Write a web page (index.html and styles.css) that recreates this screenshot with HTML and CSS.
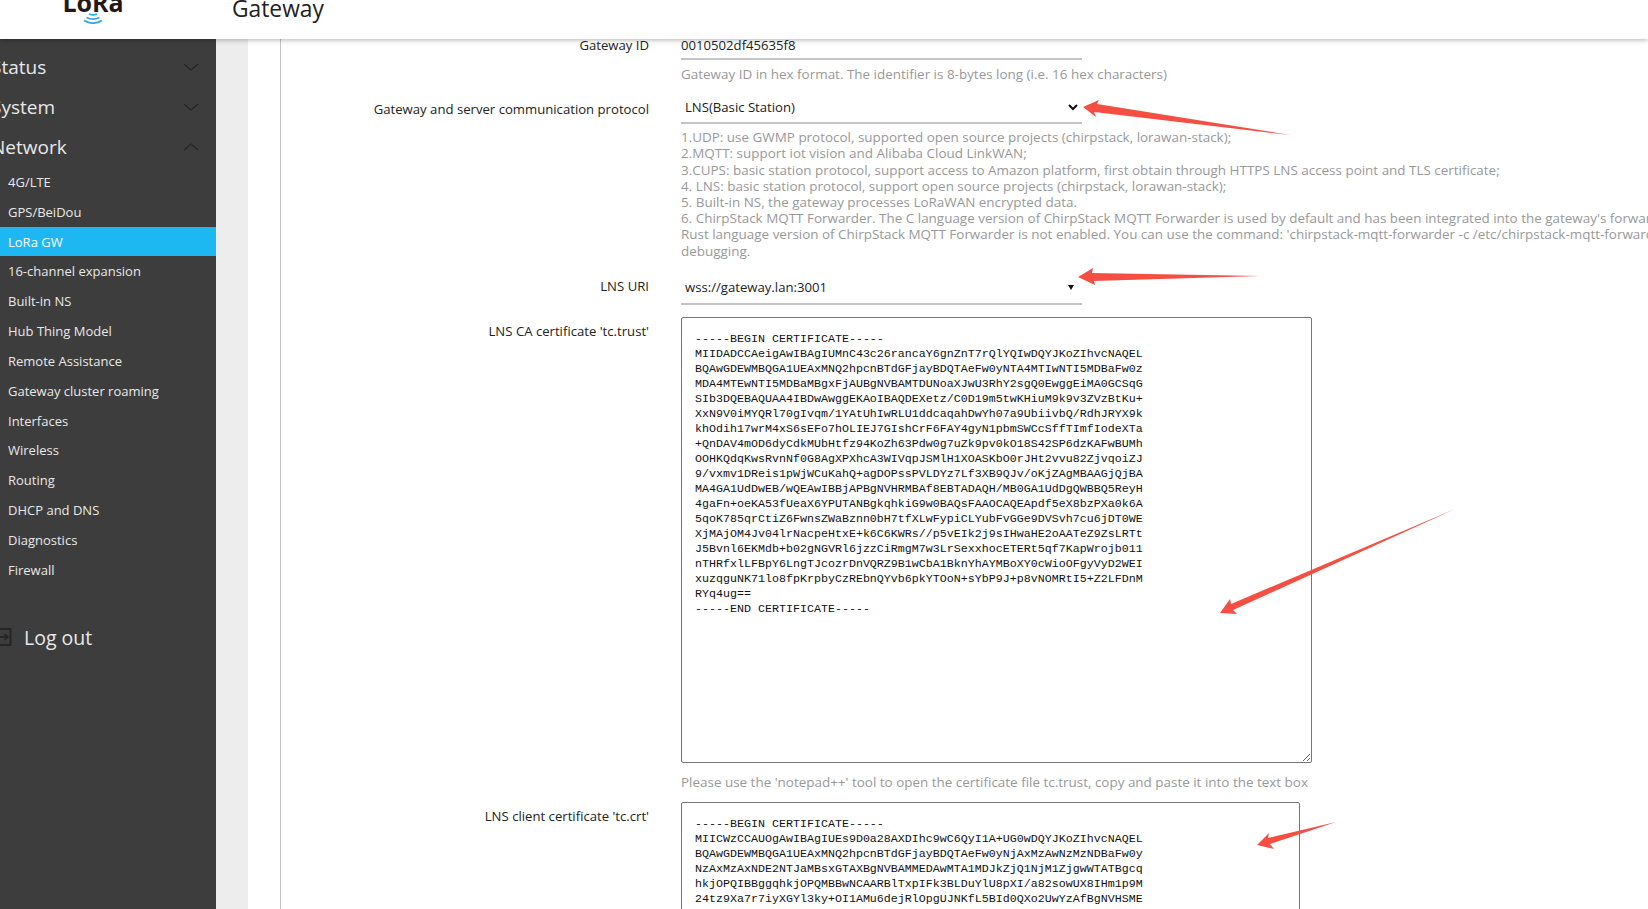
FILE: index.html
```html
<!DOCTYPE html>
<html lang="en">
<head>
    <meta charset="UTF-8">
    <title>LoRa Gateway</title>
    <link rel="stylesheet" href="styles.css">
</head>
<body>
    <header class="topbar">
        <div class="logo">
            <span class="logo-text">LoRa</span>
            <svg class="logo-waves" width="20" height="11" viewBox="0 0 20 11" fill="none" stroke="#35a9e4" stroke-width="1.800">
                <path d="M6 1c2.500 1.200 5.500 1.200 8 0"/>
                <path d="M3.500 4.500c4 2 9 2 13 0"/>
                <path d="M1 7.500c5.500 3.200 12.500 3.200 18 0"/>
            </svg>
        </div>
        <div class="page-title">Gateway</div>
    </header>

    <div class="layout">
        <nav class="sidebar">
            <a class="nav-top">Status
                <svg class="chev" width="16" height="8" viewBox="0 0 16 8"><path d="M1 1l7 6 7-6"/></svg>
            </a>
            <a class="nav-top">System
                <svg class="chev" width="16" height="8" viewBox="0 0 16 8"><path d="M1 1l7 6 7-6"/></svg>
            </a>
            <a class="nav-top">Network
                <svg class="chev" width="16" height="8" viewBox="0 0 16 8"><path d="M1 7l7-6 7 6"/></svg>
            </a>
            <ul class="nav-sub">
                <li>4G/LTE</li>
                <li>GPS/BeiDou</li>
                <li class="active">LoRa GW</li>
                <li>16-channel expansion</li>
                <li>Built-in NS</li>
                <li>Hub Thing Model</li>
                <li>Remote Assistance</li>
                <li>Gateway cluster roaming</li>
                <li>Interfaces</li>
                <li>Wireless</li>
                <li>Routing</li>
                <li>DHCP and DNS</li>
                <li>Diagnostics</li>
                <li>Firewall</li>
            </ul>
            <a class="logout">
                <svg class="logout-icon" width="12" height="18" viewBox="0 0 12 18" fill="none" stroke="#262626" stroke-width="2">
                    <path d="M0 1h10.500v16H0"/>
                    <path d="M0 9h7M4.500 6l3 3-3 3"/>
                </svg>
                Log out
            </a>
        </nav>

        <main class="content">
            <div class="panel">
                <form class="form">
                    <div class="row row-first">
                        <label>Gateway ID</label>
                        <div class="field">
                            <input class="text-input" type="text" value="0010502df45635f8">
                            <p class="help help-short">Gateway ID in hex format. The identifier is 8-bytes long (i.e. 16 hex characters)</p>
                        </div>
                    </div>
                    <div class="row">
                        <label class="label-protocol">Gateway and server communication protocol</label>
                        <div class="field">
                            <div class="select-box">
                                <span>LNS(Basic Station)</span>
                                <svg width="10" height="7" viewBox="0 0 10 7" fill="none" stroke="#111" stroke-width="2"><path d="M1 1l4 4 4-4"/></svg>
                            </div>
                            <p class="help help-list">1.UDP: use GWMP protocol, supported open source projects (chirpstack, lorawan-stack);<br>
2.MQTT: support iot vision and Alibaba Cloud LinkWAN;<br>
3.CUPS: basic station protocol, support access to Amazon platform, first obtain through HTTPS LNS access point and TLS certificate;<br>
4. LNS: basic station protocol, support open source projects (chirpstack, lorawan-stack);<br>
5. Built-in NS, the gateway processes LoRaWAN encrypted data.<br>
6. ChirpStack MQTT Forwarder. The C language version of ChirpStack MQTT Forwarder is used by default and has been integrated into the gateway's forwarder.<br>
Rust language version of ChirpStack MQTT Forwarder is not enabled. You can use the command: 'chirpstack-mqtt-forwarder -c /etc/chirpstack-mqtt-forwarder.toml' for<br>
debugging.</p>
                        </div>
                    </div>
                    <div class="row row-uri">
                        <label>LNS URI</label>
                        <div class="field">
                            <div class="select-box select-uri">
                                <span>wss://gateway.lan:3001</span>
                                <svg width="10" height="7" viewBox="0 0 10 7" fill="#111"><path d="M2 1h6L5 6z"/></svg>
                            </div>
                        </div>
                    </div>
                    <div class="row row-cert">
                        <label class="label-area">LNS CA certificate 'tc.trust'</label>
                        <div class="field">
                            <textarea class="cert cert-ca" spellcheck="false">-----BEGIN CERTIFICATE-----
MIIDADCCAeigAwIBAgIUMnC43c26rancaY6gnZnT7rQlYQIwDQYJKoZIhvcNAQEL
BQAwGDEWMBQGA1UEAxMNQ2hpcnBTdGFjayBDQTAeFw0yNTA4MTIwNTI5MDBaFw0z
MDA4MTEwNTI5MDBaMBgxFjAUBgNVBAMTDUNoaXJwU3RhY2sgQ0EwggEiMA0GCSqG
SIb3DQEBAQUAA4IBDwAwggEKAoIBAQDEXetz/C0D19m5twKHiuM9k9v3ZVzBtKu+
XxN9V0iMYQRl70gIvqm/1YAtUhIwRLU1ddcaqahDwYh07a9UbiivbQ/RdhJRYX9k
khOdih17wrM4xS6sEFo7hOLIEJ7GIshCrF6FAY4gyN1pbmSWCcSffTImfIodeXTa
+QnDAV4mOD6dyCdkMUbHtfz94KoZh63Pdw0g7uZk9pv0kO18S42SP6dzKAFwBUMh
OOHKQdqKwsRvnNf0G8AgXPXhcA3WIVqpJSMlH1XOASKbO0rJHt2vvu82ZjvqoiZJ
9/vxmv1DReis1pWjWCuKahQ+agDOPssPVLDYz7Lf3XB9QJv/oKjZAgMBAAGjQjBA
MA4GA1UdDwEB/wQEAwIBBjAPBgNVHRMBAf8EBTADAQH/MB0GA1UdDgQWBBQ5ReyH
4gaFn+oeKA53fUeaX6YPUTANBgkqhkiG9w0BAQsFAAOCAQEApdf5eX8bzPXa0k6A
5qoK785qrCtiZ6FwnsZWaBznn0bH7tfXLwFypiCLYubFvGGe9DVSvh7cu6jDT0WE
XjMAjOM4Jv04lrNacpeHtxE+k6C6KWRs//p5vEIk2j9sIHwaHE2oAATeZ9ZsLRTt
J5Bvnl6EKMdb+b02gNGVRl6jzzCiRmgM7w3LrSexxhocETERt5qf7KapWrojb011
nTHRfxlLFBpY6LngTJcozrDnVQRZ9B1wCbA1BknYhAYMBoXY0cWioOFgyVyD2WEI
xuzqguNK71lo8fpKrpbyCzREbnQYvb6pkYTOoN+sYbP9J+p8vNOMRtI5+Z2LFDnM
RYq4ug==
-----END CERTIFICATE-----</textarea>
                            <p class="help help-cert">Please use the 'notepad++' tool to open the certificate file tc.trust, copy and paste it into the text box</p>
                        </div>
                    </div>
                    <div class="row">
                        <label class="label-area">LNS client certificate 'tc.crt'</label>
                        <div class="field">
                            <textarea class="cert cert-client" spellcheck="false">-----BEGIN CERTIFICATE-----
MIICWzCCAUOgAwIBAgIUEs9D0a28AXDIhc9wC6QyI1A+UG0wDQYJKoZIhvcNAQEL
BQAwGDEWMBQGA1UEAxMNQ2hpcnBTdGFjayBDQTAeFw0yNjAxMzAwNzMzNDBaFw0y
NzAxMzAxNDE2NTJaMBsxGTAXBgNVBAMMEDAwMTA1MDJkZjQ1NjM1ZjgwWTATBgcq
hkjOPQIBBggqhkjOPQMBBwNCAARBlTxpIFk3BLDuYlU8pXI/a82sowUX8IHm1p9M
24tz9Xa7r7iyXGYl3ky+OI1AMu6dejRlOpgUJNKfL5BId0QXo2UwYzAfBgNVHSME</textarea>
                        </div>
                    </div>
                </form>
            </div>
        </main>
    </div>

    <!-- red arrows drawn over the screenshot -->
    <svg class="arrows" width="1648" height="909" viewBox="0 0 1648 909" fill="#f44f42">
        <path d="M1083 107L1099 100 1097 104 1290 135 1094 112 1096 117z"/>
        <path d="M1078 277L1093 268 1092 273 1260 276 1094 281 1095 285z"/>
        <path d="M1220 613L1230 599 1231 604 1455 509 1233 610 1237 614z"/>
        <path d="M1257 845L1269 833 1268 838 1336 822 1270 844 1274 849z"/>
    </svg>
</body>
</html>
```

FILE: styles.css
```css
* {
    box-sizing: border-box;
}

html, body {
    height: 100%;
}

body {
    margin: 0;
    overflow: hidden;
    background: #fff;
    color: #222;
    font-family: "Open Sans", "Noto Sans", sans-serif;
    font-size: 13.150px;
}

/* Шапка */
.topbar {
    position: relative;
    z-index: 2;
    display: flex;
    align-items: flex-end;
    height: 39px;
    overflow: hidden;
    background: #fff;
    box-shadow: 0 1px 5px rgba(0, 0, 0, 0.3);
}

.logo {
    display: flex;
    flex-direction: column;
    align-items: center;
    flex: none;
    width: 58px;
    margin-left: 64px;
    padding-bottom: 26px;
}

.logo-text {
    display: flex;
    align-items: flex-end;
    height: 14px;
    color: #231815;
    font-size: 25px;
    font-weight: 700;
    line-height: 22px;
}

.logo-waves {
    margin-top: 0;
    margin-bottom: -11px;
}

.page-title {
    margin-left: 110px;
    padding-bottom: 17px;
    color: #222;
    font-size: 22.800px;
    line-height: 26px;
}

.layout {
    display: flex;
    height: 870px;
}

/* Бокове меню */
.sidebar {
    flex: none;
    width: 216px;
    padding-top: 8px;
    overflow: hidden;
    background: #3d3d3d;
    color: #e8e8e8;
}

.nav-top {
    display: flex;
    align-items: center;
    justify-content: space-between;
    height: 40px;
    margin-left: -9px;
    padding-right: 17px;
    font-size: 19px;
}

.chev {
    fill: none;
    stroke: #262626;
    stroke-width: 1.200;
}

.nav-sub {
    margin: 0;
    padding: 0;
    list-style: none;
}

.nav-sub li {
    height: 29.830px;
    padding-left: 8px;
    font-size: 13px;
    line-height: 31px;
}

.nav-sub .active {
    background: #1db8f2;
    color: #fff;
}

.logout {
    display: flex;
    align-items: center;
    gap: 12px;
    margin-top: 39px;
    font-size: 19.500px;
}

/* Контент */
.content {
    flex: 1;
    min-width: 0;
    padding-left: 32px;
    background: #ededed;
}

.panel {
    height: 100%;
    padding-left: 32px;
    background: #fff;
}

.form {
    height: 100%;
    overflow: hidden;
    border-left: 1px solid #c4c4c4;
}

.row {
    display: flex;
    gap: 32px;
    margin-bottom: 13px;
}

.row-first {
    margin-bottom: 10px;
}

.row-uri {
    margin-bottom: 12px;
}

.row-cert {
    margin-bottom: 12px;
}

.row label {
    flex: none;
    width: 368px;
    padding-top: 5px;
    text-align: right;
    color: #222;
}

.row .label-protocol {
    padding-top: 8px;
}

.row .label-area {
    padding-top: 5px;
}

.row-first label {
    margin-top: -3px;
    padding-top: 0;
}

.field {
    flex: 1;
    min-width: 0;
    white-space: nowrap;
}

.text-input {
    display: block;
    width: 401px;
    height: 21px;
    padding: 0 0 7px;
    border: 0;
    border-bottom: 2px solid #c4c4c4;
    outline: none;
    color: #222;
    font: inherit;
}

.select-box {
    display: flex;
    align-items: center;
    justify-content: space-between;
    width: 401px;
    height: 32px;
    padding: 0 4px;
    border-bottom: 2px solid #c4c4c4;
}

.select-uri {
    height: 33px;
    padding-right: 6px;
}

.help {
    margin: 6px 0 0;
    color: #999;
    font-size: 13.450px;
    line-height: 16.200px;
}

.help-list {
    margin-top: 5px;
}

.help-cert {
    margin-top: 11px;
}

.cert {
    display: block;
    height: 446px;
    padding: 14px 13px 12px;
    overflow: hidden;
    border: 1px solid #767676;
    border-radius: 2px;
    outline: none;
    color: #111;
    font-family: "Liberation Mono", monospace;
    font-size: 11.670px;
    line-height: 15px;
    white-space: pre;
}

.cert-ca {
    width: 631px;
}

.cert-client {
    width: 619px;
}

/* Стрілки поверх скріншота */
.arrows {
    position: absolute;
    top: 0;
    left: 0;
    z-index: 3;
    pointer-events: none;
}
```
